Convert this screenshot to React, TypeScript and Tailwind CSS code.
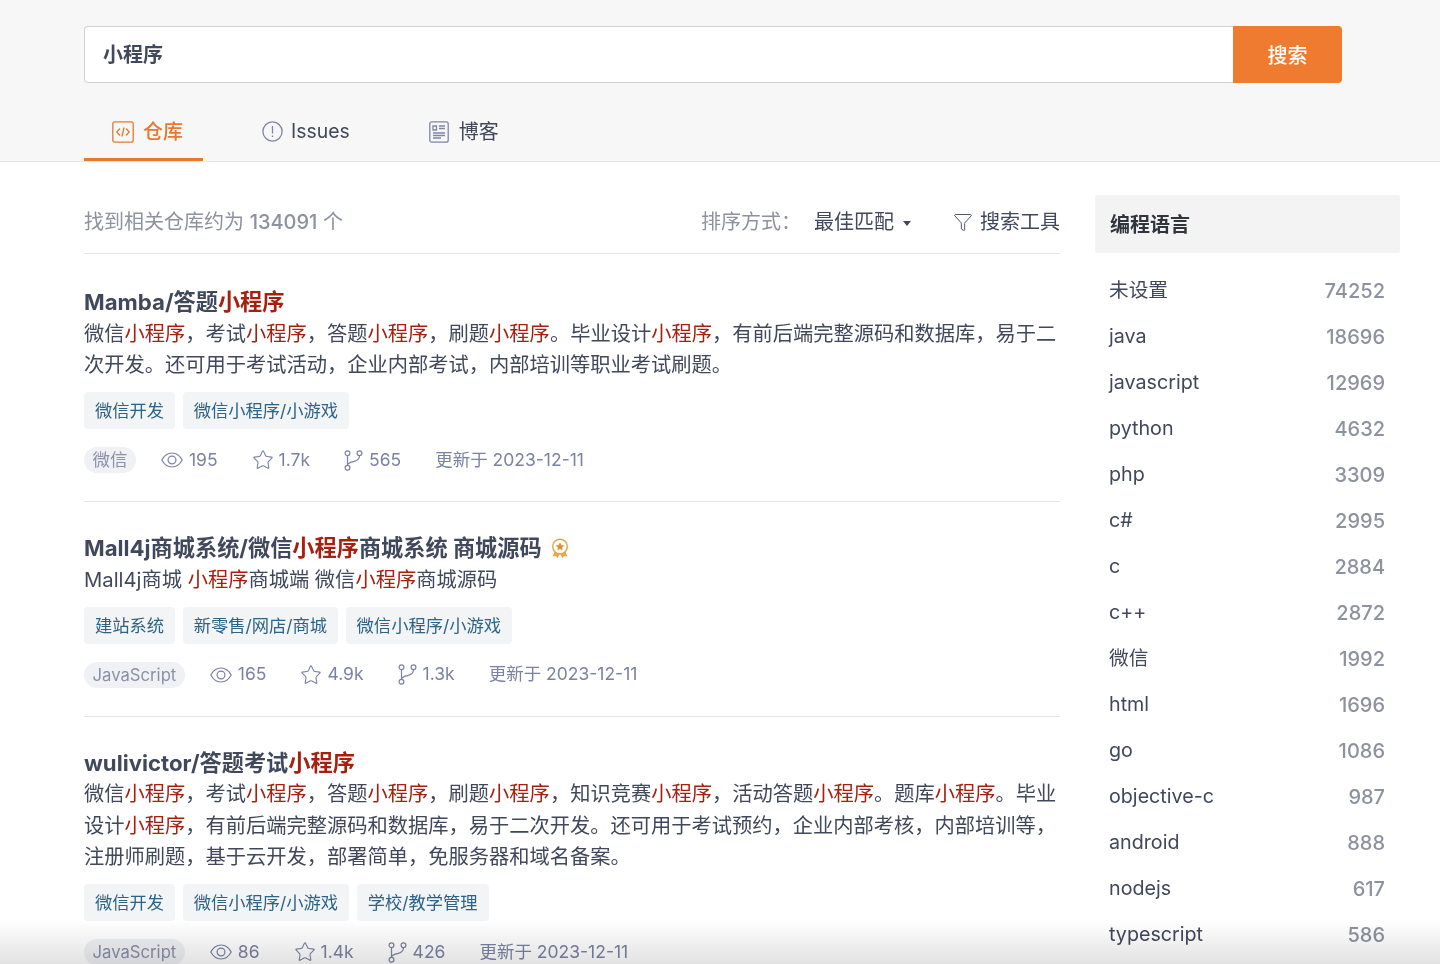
import { Star, Funnel } from "lucide-react";
import type { ReactNode } from "react";

const FONT = "[font-family:Inter,'Noto_Sans_CJK_SC',sans-serif]";

type Repo = {
  title: ReactNode;
  desc: ReactNode;
  tags: string[];
  lang: string;
  watch: string;
  stars: string;
  forks: string;
  badge?: boolean;
};

function Hl({ children = "小程序" }: { children?: ReactNode }) {
  return <span className="text-[#a5200f]">{children}</span>;
}

const repos: Repo[] = [
  {
    title: <>Mamba/答题<Hl /></>,
    desc: (
      <>
        微信<Hl />，考试<Hl />，答题<Hl />，刷题<Hl />。毕业设计<Hl />，有前后端完整源码和数据库，易于二次开发。还可用于考试活动，企业内部考试，内部培训等职业考试刷题。
      </>
    ),
    tags: ["微信开发", "微信小程序/小游戏"],
    lang: "微信",
    watch: "195",
    stars: "1.7k",
    forks: "565",
  },
  {
    title: <>Mall4j商城系统/微信<Hl />商城系统 商城源码</>,
    desc: <>Mall4j商城 <Hl />商城端 微信<Hl />商城源码</>,
    tags: ["建站系统", "新零售/网店/商城", "微信小程序/小游戏"],
    lang: "JavaScript",
    watch: "165",
    stars: "4.9k",
    forks: "1.3k",
    badge: true,
  },
  {
    title: <>wulivictor/答题考试<Hl /></>,
    desc: (
      <>
        微信<Hl />，考试<Hl />，答题<Hl />，刷题<Hl />，知识竞赛<Hl />，活动答题<Hl />。题库<Hl />。毕业设计<Hl />，有前后端完整源码和数据库，易于二次开发。还可用于考试预约，企业内部考核，内部培训等，注册师刷题，基于云开发，部署简单，免服务器和域名备案。
      </>
    ),
    tags: ["微信开发", "微信小程序/小游戏", "学校/教学管理"],
    lang: "JavaScript",
    watch: "86",
    stars: "1.4k",
    forks: "426",
  },
];

const langs: [string, string][] = [
  ["未设置", "74252"],
  ["java", "18696"],
  ["javascript", "12969"],
  ["python", "4632"],
  ["php", "3309"],
  ["c#", "2995"],
  ["c", "2884"],
  ["c++", "2872"],
  ["微信", "1992"],
  ["html", "1696"],
  ["go", "1086"],
  ["objective-c", "987"],
  ["android", "888"],
  ["nodejs", "617"],
  ["typescript", "586"],
];

function RepoIcon() {
  return (
    <svg width="22" height="22" viewBox="0 0 22 22" fill="none" stroke="currentColor" strokeWidth="1.3">
      <rect x="0.8" y="0.8" width="20.4" height="20.4" rx="2" />
      <path d="M8 7.5 4.8 11 8 14.5M14 7.5l3.2 3.5-3.2 3.5M12 6.5 10 15.5" />
    </svg>
  );
}

function IssueIcon() {
  return (
    <svg width="21" height="21" viewBox="0 0 21 21" fill="none" stroke="#7d86a8" strokeWidth="1.3">
      <circle cx="10.5" cy="10.5" r="9.6" />
      <path d="M10.5 5v7.5M10.5 14.6v1.4" />
    </svg>
  );
}

function BlogIcon() {
  return (
    <svg width="20" height="22" viewBox="0 0 20 22" fill="none" stroke="#7d86a8" strokeWidth="1.3">
      <rect x="0.8" y="0.8" width="18.4" height="20.4" rx="2" />
      <path d="M4 5h3.5v4H4zM10 5h6M10 7.5h6M4 12h12M4 14.5h12M4 17h8" />
    </svg>
  );
}

function EyeIcon() {
  return (
    <svg width="22" height="16" viewBox="0 0 22 16" fill="none" stroke="currentColor" strokeWidth="1.2">
      <path d="M0.8 8C3.4 3.2 7 1 11 1s7.6 2.2 10.2 7C18.6 12.8 15 15 11 15S3.4 12.8 0.8 8Z" />
      <circle cx="11" cy="8" r="3.9" />
    </svg>
  );
}

function BranchIcon() {
  return (
    <svg width="19" height="21" viewBox="0 0 19 21" fill="none" stroke="currentColor" strokeWidth="1.2">
      <circle cx="3.5" cy="3.2" r="2.4" />
      <circle cx="3.5" cy="17.8" r="2.4" />
      <circle cx="15.5" cy="3.2" r="2.4" />
      <path d="M3.5 5.6v9.8M15.5 5.6c0 4.2-2.6 5.4-6 6-3.4.6-5.4 1.6-6 3.2" />
    </svg>
  );
}

function Medal() {
  return (
    <svg width="20" height="21" viewBox="0 0 20 21" fill="none" className="ml-2">
      <path d="M5 13 2.5 18.5l3.5-.6 1.6 2.4L10 15.5l2.4 4.8 1.6-2.4 3.5.6L15 13z" fill="#e5a84a" />
      <circle cx="10" cy="8.5" r="7.3" fill="#fff" stroke="#e5a84a" strokeWidth="1.5" />
      <path d="m10 4.3 1.3 2.8 3 .3-2.3 2 .7 3L10 10.9l-2.7 1.5.7-3-2.3-2 3-.3z" fill="#d9902f" />
    </svg>
  );
}

function Meta({ icon, gap, children }: { icon: ReactNode; gap: string; children: ReactNode }) {
  return (
    <span className={`flex items-center ${gap}`}>
      {icon}
      <span>{children}</span>
    </span>
  );
}

function RepoItem({ repo, last }: { repo: Repo; last: boolean }) {
  return (
    <div className={`pt-[31px] ${last ? "" : "border-b border-[#e5e6e8] pb-[28px]"}`}>
      <div className="flex items-center text-[22.2px] leading-[30px] font-bold text-[#40485b]">
        <span>{repo.title}</span>
        {repo.badge && <Medal />}
      </div>
      <p className="mt-[0.5px] text-[20.25px] leading-[31.5px] text-[#40485b]">{repo.desc}</p>
      <div className="mt-[11.5px] flex gap-[7.5px]">
        {repo.tags.map((t) => (
          <span key={t} className="h-[37px] rounded-[4px] bg-[#f3f4f6] px-[11px] text-[17.3px] leading-[37px] text-[#2c6488]">
            {t}
          </span>
        ))}
      </div>
      <div className="mt-[18px] flex h-[26px] items-center gap-[34px] text-[17.5px] text-[#7b83a3]">
        <span className={`-mr-[9px] rounded-full bg-[#f0f1f4] px-[8.5px] leading-[26px] text-[#8a90a8] ${repo.lang === "微信" ? "text-[17.5px]" : "text-[16.7px]"}`}>
          {repo.lang}
        </span>
        <Meta gap="gap-[6px]" icon={<EyeIcon />}>{repo.watch}</Meta>
        <Meta gap="gap-[5px]" icon={<Star size={22} strokeWidth={1.2} />}>{repo.stars}</Meta>
        <Meta gap="gap-[6px]" icon={<BranchIcon />}>{repo.forks}</Meta>
        <span>更新于 2023-12-11</span>
      </div>
    </div>
  );
}

export default function App() {
  return (
    <div className={`relative h-[964px] overflow-hidden bg-white ${FONT}`}>
      <header className="h-[162px] border-b border-[#e5e6e8] bg-[#f7f7f7] px-[84px] pt-[26px]">
        <div className="flex h-[57px] w-[1258px]">
          <div className="flex flex-1 items-center rounded-l-[4px] border border-r-0 border-[#cfd1d4] bg-white pl-[18px] text-[20px] font-semibold text-[#40485b]">
            小程序
          </div>
          <button className="w-[109px] rounded-r-[4px] bg-[#ee7b2f] pt-[2px] text-[20px] font-medium text-white">搜索</button>
        </div>
        <nav className="mt-[18px] flex h-[60px] text-[20px] text-[#40485b]">
          <a className="flex h-[60px] w-[119px] items-center gap-[9px] border-b-[3px] border-[#e8782f] pl-[28px] pt-[4px] font-medium text-[#e8782f]">
            <RepoIcon />
            <span>仓库</span>
          </a>
          <a className="ml-[59px] flex h-[60px] items-center gap-[8px] pt-[1px] text-[19.4px]">
            <IssueIcon />
            <span>Issues</span>
          </a>
          <a className="ml-[79px] flex h-[60px] items-center gap-[10px] pt-[1px]">
            <BlogIcon />
            <span>博客</span>
          </a>
        </nav>
      </header>

      <main className="flex gap-[35px] pl-[84px] pt-[33px]">
        <section className="w-[976px] shrink-0">
          <div className="mb-[2px] flex h-[59px] items-center justify-between border-b border-[#e5e6e8] pb-[4px]">
            <span className="text-[20px] text-[#8c929e]">找到相关仓库约为 <span className="font-medium">134091</span> 个</span>
            <div className="flex items-center text-[20px] text-[#40485b]">
              <span className="text-[#8c929e]">排序方式：</span>
              <span className="ml-[13px]">最佳匹配</span>
              <span className="ml-[9px] mt-[2px] h-0 w-0 border-x-4 border-t-[5px] border-x-transparent border-t-[#40485b]" />
              <Funnel size={20} strokeWidth={1.1} className="ml-[42px] mr-[7px]" />
              <span>搜索工具</span>
            </div>
          </div>
          {repos.map((r, i) => (
            <RepoItem key={i} repo={r} last={i === repos.length - 1} />
          ))}
        </section>

        <aside className="w-[305px] shrink-0">
          <div className="flex h-[58px] items-center rounded-[2px] bg-[#f3f3f3] px-[15px] pt-[2px] text-[20px] font-bold text-[#2f343d]">
            编程语言
          </div>
          <ul className="mt-[15px] pl-[14px] pr-[15px]">
            {langs.map(([name, count]) => (
              <li key={name} className="flex h-[46px] items-center justify-between text-[19.7px]">
                <span className="text-[#40485b]">{name}</span>
                <span className="text-[20px] font-medium text-[#8c929e]">{count}</span>
              </li>
            ))}
          </ul>
        </aside>
      </main>

      <div className="pointer-events-none absolute inset-x-0 bottom-0 h-[44px] bg-gradient-to-b from-white to-[#e2e2e2] mix-blend-multiply" />
    </div>
  );
}
